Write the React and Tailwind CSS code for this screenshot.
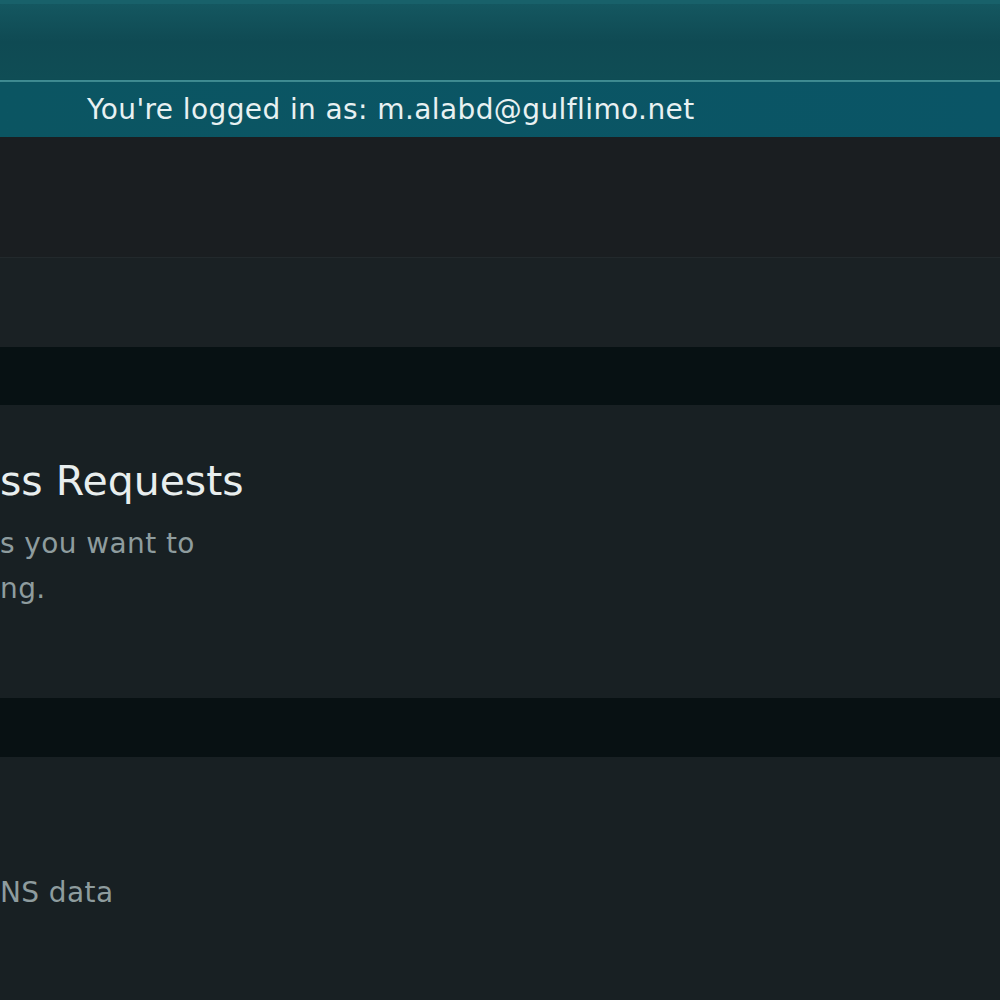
import React from 'react';

function App() {
  return (
    <div className="w-[1000px] h-[1000px] overflow-hidden bg-[#182023] font-['DejaVu_Sans','Noto_Sans',sans-serif]">
      {/* Top header */}
      <div className="h-[80px] bg-gradient-to-b from-[#145760] via-[#0f4a53] to-[#0f4d55] border-t-4 border-[#18616a]" />
      <div className="h-[2px] bg-[#3f8d94]" />

      {/* Logged in bar */}
      <div className="h-[55px] bg-gradient-to-r from-[#0b5562] to-[#0a5566] flex items-center pl-[87px] shadow-[0_3px_4px_rgba(0,0,0,0.6)]">
        <span className="text-[28px] leading-none text-[#e8f1f2] tracking-[0.4px]">You're logged in as: m.alabd@gulflimo.net</span>
      </div>

      {/* Empty panels */}
      <div className="h-[121px] bg-[#1a1e21] border-b border-[#22292c]" />
      <div className="h-[89px] bg-[#1a2124]" />
      <div className="h-[58px] bg-[#071113]" />

      {/* Access requests section */}
      <section className="h-[293px] bg-[#182023] pt-[52px]">
        <div className="whitespace-nowrap">
          <h2 className="text-[41px] leading-[48px] text-[#e8eeee]">ss Requests</h2>
          <p className="mt-[16px] text-[28px] leading-[45px] text-[#8e9c9e] tracking-[0.4px]">s you want to</p>
          <p className="text-[28px] leading-[45px] text-[#8e9c9e] tracking-[0.4px]">ng.</p>
        </div>
      </section>

      <div className="h-[59px] bg-[#081113]" />

      {/* DNS section */}
      <section className="h-[243px] bg-[#182023] pt-[118px]">
        <p className="text-[28px] leading-[36px] text-[#8e9c9e] tracking-[0.4px] whitespace-nowrap">NS data</p>
      </section>
    </div>
  );
}

export default App;
